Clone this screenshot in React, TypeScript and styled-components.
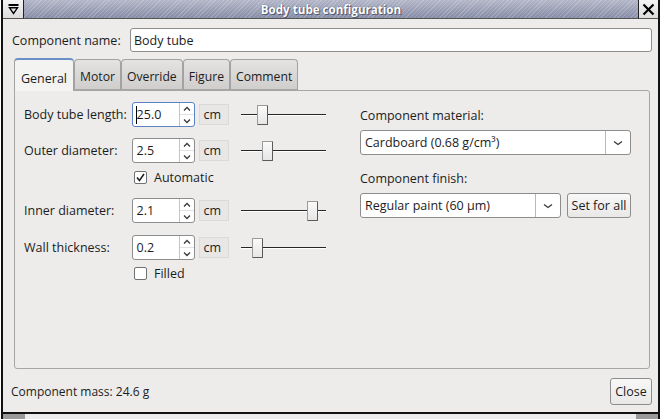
import React from 'react';
import styled, { createGlobalStyle } from 'styled-components';

const Global = createGlobalStyle`
  html, body { margin: 0; padding: 0; background: #ffffff; }
  body { font-family: "Open Sans", "Noto Sans", sans-serif; font-size: 12.5px; color: #1c1c1c; }
  * { box-sizing: border-box; }
`;

const Window = styled.div`
  width: 663px;
  height: 419px;
  padding: 0 3px 0 1px;
  background: #ffffff;
  display: flex;
`;

const Frame = styled.div`
  flex: 1;
  display: flex;
  flex-direction: column;
  border-left: 2px solid #111;
  border-right: 2px solid #111;
  background: #d6d6d6;
`;

const TitleBar = styled.div`
  height: 19px;
  display: flex;
  align-items: stretch;
`;

const TitleButton = styled.div<{ $side: 'left' | 'right' }>`
  width: ${p => (p.$side === 'left' ? 21 : 20)}px;
  background: linear-gradient(#f4f4f4, #dcdcdc);
  border-bottom: 1px solid #555;
  ${p => (p.$side === 'left' ? 'border-right: 1px solid #222;' : 'border-left: 1px solid #222;')}
  display: flex;
  align-items: center;
  justify-content: center;
`;

const TitleText = styled.div`
  flex: 1;
  display: flex;
  align-items: center;
  justify-content: center;
  background:
    repeating-linear-gradient(135deg, rgba(255,255,255,0.18) 0 1px, rgba(0,0,0,0) 1px 3px),
    linear-gradient(#b3b6c8, #868ca6);
  border-bottom: 1px solid #555;
  color: #ffffff;
  font-weight: 700;
  font-size: 11.6px;
  text-shadow: 0 0 1px #3c3f55, 1px 1px 0 #5a5e78;
`;

const Body = styled.div`
  flex: 1;
  display: flex;
  flex-direction: column;
  background: #edeceb;
  padding: 9px 6px 7px 7px;
  border-bottom: 2px solid #111;
`;

const BottomStrip = styled.div`
  height: 5px;
  display: flex;
  justify-content: space-between;
  background: #ececec;
`;

const Grip = styled.div`
  width: 22px;
  background: #9a9a9a;
`;

const NameRow = styled.div`
  height: 24px;
  display: flex;
  align-items: center;
`;

const NameLabel = styled.span`
  width: 120px;
  padding-left: 2px;
`;

const TextField = styled.div<{ $focused?: boolean }>`
  height: 100%;
  display: flex;
  align-items: center;
  background: #ffffff;
  border: 1px solid ${p => (p.$focused ? '#5b82c2' : '#8d8d8d')};
  border-radius: 3px;
  padding-left: 3px;
`;

const NameField = styled(TextField)`
  flex: 1;
`;

const TabStrip = styled.div`
  margin-top: 6px;
  height: 32px;
  display: flex;
  align-items: flex-end;
  padding-left: 4px;
  position: relative;
  z-index: 1;
`;

const Tab = styled.div<{ $active?: boolean }>`
  height: ${p => (p.$active ? 33 : 31)}px;
  margin-bottom: ${p => (p.$active ? -1 : 0)}px;
  padding: ${p => (p.$active ? '5px 6px 0' : '4px 5px 0')};
  display: flex;
  align-items: center;
  justify-content: center;
  border: 1px solid #a2a2a2;
  border-bottom: ${p => (p.$active ? 'none' : '1px solid #a6a6a6')};
  border-top: ${p => (p.$active ? '2px solid #6b8fc9' : '1px solid #a2a2a2')};
  border-radius: 4px 4px 0 0;
  background: ${p => (p.$active ? '#f3f3f2' : 'linear-gradient(#e4e3e2, #cfcecd)')};
  font-size: ${p => (p.$active ? 12.5 : 12.2)}px;
`;

const Panel = styled.div`
  flex: 1;
  margin: 0 2px 0 4px;
  border: 1px solid #a6a6a6;
  border-radius: 0 3px 3px 3px;
  padding: 11px 0 0 9px;
  display: flex;
  gap: 34px;
`;

const LeftColumn = styled.div`
  width: 302px;
  display: flex;
  flex-direction: column;
`;

const FieldRow = styled.div<{ $top: number }>`
  height: 25px;
  margin-top: ${p => p.$top}px;
  display: flex;
  align-items: center;
`;

const FieldLabel = styled.span`
  width: 108px;
  white-space: nowrap;
`;

const Spinner = styled(TextField)`
  width: 64px;
  padding-left: 0;
  position: relative;
`;

const SpinValue = styled.span`
  flex: 1;
  padding-left: 4px;
`;

const Caret = styled.span`
  position: absolute;
  left: 3px;
  top: 3px;
  width: 1px;
  height: 18px;
  background: #000;
`;

const SpinButtons = styled.div`
  width: 15px;
  height: 100%;
  border-left: 1px solid #c4c4c4;
  display: flex;
  flex-direction: column;
`;

const SpinHalf = styled.div<{ $top?: boolean }>`
  flex: 1;
  display: flex;
  align-items: center;
  justify-content: center;
  ${p => (p.$top ? 'border-bottom: 1px solid #e2e2e2;' : '')}
`;

const Unit = styled.div`
  width: 30px;
  height: 21px;
  margin-left: 4px;
  padding-left: 3px;
  display: flex;
  align-items: center;
  background: #e8e7e6;
  border: 1px solid #dbdad9;
`;

const Slider = styled.div`
  width: 85px;
  height: 25px;
  margin-left: 12px;
  position: relative;
  &::before {
    content: '';
    position: absolute;
    left: 0;
    right: 0;
    top: 12px;
    height: 1px;
    background: #262626;
    box-shadow: 0 1px 0 #ffffff;
  }
`;

const Thumb = styled.div<{ $pos: number }>`
  position: absolute;
  left: ${p => p.$pos}px;
  top: 3px;
  width: 11px;
  height: 20px;
  background: linear-gradient(#fafafa, #e6e6e6);
  border: 1px solid #9a9a9a;
  border-right-color: #5a5a5a;
  border-bottom-color: #5a5a5a;
  border-radius: 1px;
`;

const CheckRow = styled.label<{ $top: number }>`
  margin-top: ${p => p.$top}px;
  margin-left: 110px;
  height: 13px;
  display: flex;
  align-items: center;
  gap: 7px;
`;

const CheckBox = styled.span`
  width: 13px;
  height: 13px;
  background: #ffffff;
  border: 1px solid #727272;
  border-radius: 2px;
  display: flex;
  align-items: center;
  justify-content: center;
`;

const RightColumn = styled.div`
  width: 271px;
  display: flex;
  flex-direction: column;
  padding-top: 6px;
`;

const SectionLabel = styled.div<{ $top: number }>`
  margin-top: ${p => p.$top}px;
  height: 16px;
  line-height: 16px;
`;

const ComboLine = styled.div`
  margin-top: 6px;
  display: flex;
  gap: 6px;
`;

const Combo = styled.div<{ $width: number }>`
  width: ${p => p.$width}px;
  height: 25px;
  display: flex;
  align-items: center;
  background: #ffffff;
  border: 1px solid #8d8d8d;
  border-radius: 3px;
`;

const ComboText = styled.span`
  flex: 1;
  padding-left: 4px;
  white-space: nowrap;
`;

const ComboArrow = styled.span`
  width: 25px;
  height: 100%;
  border-left: 1px solid #b8b8b8;
  display: flex;
  align-items: center;
  justify-content: center;
`;

const Button = styled.div<{ $width: number; $height: number }>`
  width: ${p => p.$width}px;
  height: ${p => p.$height}px;
  display: flex;
  align-items: center;
  justify-content: center;
  background: linear-gradient(#f8f8f8, #e9e8e7);
  border: 1px solid #8d8d8d;
  border-radius: 3px;
  white-space: nowrap;
`;

const Footer = styled.div`
  margin-top: 9px;
  height: 27px;
  display: flex;
  align-items: center;
  justify-content: space-between;
`;

const MassText = styled.span`
  font-size: 12px;
  padding-left: 1px;
`;

const Chevron = ({ up, w = 7 }: { up?: boolean; w?: number }) => (
  <svg width={w + 2} height={6} viewBox={`0 0 ${w + 2} 6`}>
    <polyline
      points={up ? `1,4.5 ${(w + 2) / 2},1.5 ${w + 1},4.5` : `1,1.5 ${(w + 2) / 2},4.5 ${w + 1},1.5`}
      fill="none"
      stroke="#3a3a3a"
      strokeWidth={1.3}
    />
  </svg>
);

const SpinBox = ({ value, focused }: { value: string; focused?: boolean }) => (
  <Spinner $focused={focused}>
    {focused && <Caret />}
    <SpinValue>{value}</SpinValue>
    <SpinButtons>
      <SpinHalf $top>
        <Chevron up w={6} />
      </SpinHalf>
      <SpinHalf>
        <Chevron w={6} />
      </SpinHalf>
    </SpinButtons>
  </Spinner>
);

const Field = ({ label, value, pos, top, focused }: { label: string; value: string; pos: number; top: number; focused?: boolean }) => (
  <FieldRow $top={top}>
    <FieldLabel>{label}</FieldLabel>
    <SpinBox value={value} focused={focused} />
    <Unit>cm</Unit>
    <Slider>
      <Thumb $pos={pos} />
    </Slider>
  </FieldRow>
);

const Check = ({ label, checked, top }: { label: string; checked?: boolean; top: number }) => (
  <CheckRow $top={top}>
    <CheckBox>
      {checked && (
        <svg width="9" height="9" viewBox="0 0 9 9">
          <polyline points="1,4.5 3.5,7.5 8,1" fill="none" stroke="#222" strokeWidth={1.6} />
        </svg>
      )}
    </CheckBox>
    <span>{label}</span>
  </CheckRow>
);

export default function App() {
  return (
    <>
      <Global />
      <Window>
        <Frame>
          <TitleBar>
            <TitleButton $side="left">
              <svg width="11" height="11" viewBox="0 0 11 11">
                <line x1="0.5" y1="1" x2="10.5" y2="1" stroke="#000" strokeWidth="2" />
                <polygon points="1.5,3.8 9.5,3.8 5.5,9.5" fill="none" stroke="#000" strokeWidth="1.4" />
              </svg>
            </TitleButton>
            <TitleText>Body tube configuration</TitleText>
            <TitleButton $side="right">
              <svg width="13" height="13" viewBox="0 0 13 13">
                <line x1="1.5" y1="1.5" x2="11.5" y2="11.5" stroke="#000" strokeWidth="2.2" />
                <line x1="11.5" y1="1.5" x2="1.5" y2="11.5" stroke="#000" strokeWidth="2.2" />
              </svg>
            </TitleButton>
          </TitleBar>
          <Body>
            <NameRow>
              <NameLabel>Component name:</NameLabel>
              <NameField>Body tube</NameField>
            </NameRow>
            <TabStrip>
              <Tab $active>General</Tab>
              <Tab>Motor</Tab>
              <Tab>Override</Tab>
              <Tab>Figure</Tab>
              <Tab>Comment</Tab>
            </TabStrip>
            <Panel>
              <LeftColumn>
                <Field label="Body tube length:" value="25.0" pos={16} top={0} focused />
                <Field label="Outer diameter:" value="2.5" pos={21} top={11} />
                <Check label="Automatic" checked top={8} />
                <Field label="Inner diameter:" value="2.1" pos={66} top={14} />
                <Field label="Wall thickness:" value="0.2" pos={11} top={12} />
                <Check label="Filled" top={7} />
              </LeftColumn>
              <RightColumn>
                <SectionLabel $top={0}>Component material:</SectionLabel>
                <ComboLine>
                  <Combo $width={271}>
                    <ComboText>Cardboard (0.68 g/cm³)</ComboText>
                    <ComboArrow>
                      <Chevron w={8} />
                    </ComboArrow>
                  </Combo>
                </ComboLine>
                <SectionLabel $top={16}>Component finish:</SectionLabel>
                <ComboLine>
                  <Combo $width={201}>
                    <ComboText>Regular paint (60 μm)</ComboText>
                    <ComboArrow>
                      <Chevron w={8} />
                    </ComboArrow>
                  </Combo>
                  <Button $width={64} $height={25}>Set for all</Button>
                </ComboLine>
              </RightColumn>
            </Panel>
            <Footer>
              <MassText>Component mass: 24.6 g</MassText>
              <Button $width={42} $height={27}>Close</Button>
            </Footer>
          </Body>
          <BottomStrip>
            <Grip />
            <Grip />
          </BottomStrip>
        </Frame>
      </Window>
    </>
  );
}
